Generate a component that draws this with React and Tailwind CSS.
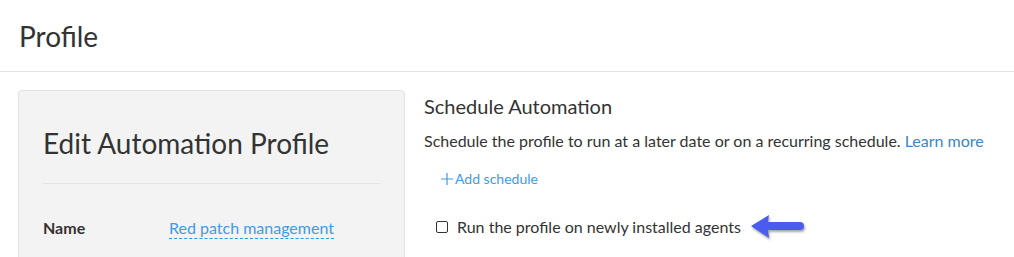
import React from 'react';

const font = { fontFamily: '"Source Sans Pro", Lato, "Liberation Sans", sans-serif' };

const Arrow = () => (
  <svg width="60" height="30" viewBox="0 0 60 30" className="ml-2 drop-shadow-[1px_2px_1px_rgba(0,0,0,0.35)]">
    <path d="M2 14 L20 3 L19 10 L51 10 A4 4 0 0 1 51 18 L19 18 L20 26 Z" fill="#4a5cf0" />
  </svg>
);

const Plus = () => (
  <svg width="12" height="12" viewBox="0 0 12 12" className="mr-[2px]">
    <path d="M6 0 V12 M0 6 H12" stroke="#3d9be9" strokeWidth="1.2" />
  </svg>
);

const App = () => {
  return (
    <div className="w-[1014px] h-[257px] overflow-hidden bg-white text-[#333]" style={font}>
      <div className="h-[72px] border-b border-[#e3e3e3] px-[19px] flex items-center">
        <h1 className="text-[28px] leading-none font-normal">Profile</h1>
      </div>
      <div className="flex gap-[20px] px-[18px] pt-[18px]">
        <div className="w-[387px] h-[200px] bg-[#f3f3f3] border border-[#e2e2e2] rounded-[4px] px-[24px] pt-[34px]">
          <h2 className="text-[28px] leading-[36px] font-normal">Edit Automation Profile</h2>
          <div className="border-t border-[#e4e4e4] mt-[22px] mb-[32px]" />
          <div className="flex items-center text-[16px]">
            <span className="w-[126px] font-bold">Name</span>
            <span className="text-[#3d9be9] border-b border-dashed border-[#2196f3] leading-[20px]">Red patch management</span>
          </div>
        </div>
        <div className="pt-[3px] -ml-px">
          <h3 className="text-[20px] leading-[26px] font-normal">Schedule Automation</h3>
          <p className="text-[16px] mt-[11px] leading-[22px]">
            Schedule the profile to run at a later date or on a recurring schedule.{' '}
            <a className="text-[#3a86c8]">Learn more</a>
          </p>
          <div className="mt-[16px] ml-[17px] text-[14px] text-[#3d9be9] flex items-center">
            <Plus />Add schedule
          </div>
          <div className="mt-[23px] ml-[12px] flex items-center text-[16px]">
            <span className="w-[12px] h-[12px] border border-[#333] rounded-[2px] mr-[9px]" />
            <span>Run the profile on newly installed agents</span>
            <Arrow />
          </div>
        </div>
      </div>
    </div>
  );
};

export default App;
